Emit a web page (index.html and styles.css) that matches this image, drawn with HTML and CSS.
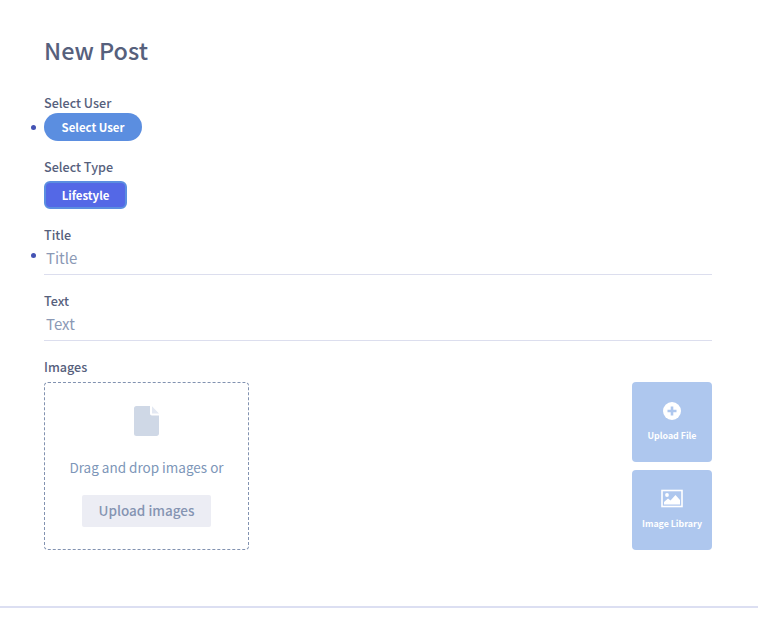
FILE: index.html
```html
<!DOCTYPE html>
<html lang="en">
<head>
<meta charset="utf-8">
<title>New Post</title>
<link rel="stylesheet" href="styles.css">
</head>
<body>
<main class="page">
  <h1 class="heading">New Post</h1>
  <section class="field field-user">
    <div class="label">Select User</div>
    <div class="row"><button class="btn btn-user marked">Select User</button></div>
  </section>
  <section class="field field-type">
    <div class="label">Select Type</div>
    <div class="row row-type"><button class="btn btn-type">Lifestyle</button></div>
  </section>
  <section class="field field-title">
    <div class="label">Title</div>
    <div class="input marked">Title</div>
  </section>
  <section class="field field-text">
    <div class="label">Text</div>
    <div class="input">Text</div>
  </section>
  <section class="field">
    <div class="label">Images</div>
    <div class="images">
      <div class="dropzone">
        <svg class="file-icon" width="26" height="32" viewBox="0 0 26 32"><path d="M2.500 1H16v7.500c0 1.200.8 2 2 2h7V28.500c0 1.400-1.100 2.500-2.500 2.500h-20A2.500 2.500 0 0 1 0 28.500V3.500A2.500 2.500 0 0 1 2.500 1z" fill="#cfd8e6"/><path d="M18 1.200 25 8.500h-7z" fill="#e3e8f2"/></svg>
        <div class="drop-text">Drag and drop images or</div>
        <button class="upload">Upload images</button>
      </div>
      <div class="actions">
        <button class="tile">
          <svg width="20" height="20" viewBox="0 0 20 20"><circle cx="10" cy="10" r="9" fill="#fff"/><path d="M10 5.500v9M5.500 10h9" stroke="#aec7ee" stroke-width="2.600"/></svg>
          <span>Upload File</span>
        </button>
        <button class="tile">
          <svg width="22" height="20" viewBox="0 -0.500 22 20"><rect x="1" y="1" width="20" height="16" fill="none" stroke="#fff" stroke-width="1.600"/><circle cx="6" cy="5.500" r="1.900" fill="#fff"/><path d="M3 15v-2.500l4-3.500 2.500 2L14.500 5.500 19 10.500V15z" fill="#fff"/></svg>
          <span>Image Library</span>
        </button>
      </div>
    </div>
  </section>
</main>
<div class="rule"></div>
</body>
</html>
```
FILE: styles.css
```css
* { box-sizing: border-box; }
html, body { margin: 0; background: #fff; }
body {
  height: 631px;
  overflow: hidden;
  font-family: "Noto Sans CJK SC", "Noto Sans", sans-serif;
  color: #56607c;
}
.page { height: 606px; padding: 35px 46px 0 44px; }
.heading {
  margin: 0 0 28px;
  font-size: 23.400px;
  line-height: 30px;
  font-weight: 500;
  color: #56607c;
}
.field-user { height: 64px; }
.field-type { height: 68px; }
.field-title, .field-text { height: 66px; }
.label {
  font-size: 12.600px;
  line-height: 20px;
  font-weight: 500;
  color: #56607c;
  height: 20px;
}
.row { display: flex; }
.row-type { margin-top: 4px; }
.btn {
  height: 28px;
  border: 0;
  padding: 0 0 1px;
  font-family: inherit;
  font-size: 11.400px;
  font-weight: 700;
  color: #fff;
}
.btn-user { width: 98px; border-radius: 14px; background: #5b8ee0; }
.btn-type { width: 83px; border-radius: 6px; background: #5468e6; border: 2px solid #5b8ee0; }
.marked { position: relative; }
.marked::before {
  content: "";
  position: absolute;
  left: -13px;
  top: 12px;
  width: 5px;
  height: 5px;
  border-radius: 50%;
  background: #4453b4;
}
.input {
  height: 30px;
  padding: 0 2px;
  font-size: 15px;
  line-height: 26px;
  color: #8b99b5;
  border-bottom: 1px solid #dcdeee;
}
.input.marked::before { top: 8px; }
.images { display: flex; justify-content: space-between; margin-top: 5px; }
.dropzone {
  width: 205px;
  height: 168px;
  border: 1px dashed #8292b0;
  border-radius: 4px;
  display: flex;
  flex-direction: column;
  align-items: center;
  padding-top: 22px;
}
.file-icon { display: block; width: 26px; height: 32px; }
.drop-text {
  margin-top: 20px;
  font-size: 13.500px;
  line-height: 20px;
  color: #7d96b8;
}
.upload {
  margin-top: 18px;
  width: 129px;
  height: 32px;
  border: 0;
  border-radius: 2px;
  padding: 0 0 2px;
  background: #ecedf4;
  font-family: inherit;
  font-size: 13.500px;
  font-weight: 500;
  color: #8594b2;
}
.actions { display: flex; flex-direction: column; gap: 8px; }
.tile {
  width: 80px;
  height: 80px;
  border: 0;
  border-radius: 4px;
  background: #aec7ee;
  padding: 19px 0 0;
  color: #fff;
  font-family: inherit;
  display: flex;
  flex-direction: column;
  align-items: center;
  gap: 8px;
  font-size: 8.800px;
  line-height: 14px;
  font-weight: 700;
}
.tile svg { display: block; }
.rule { height: 2px; background: #dcdff2; }
```
